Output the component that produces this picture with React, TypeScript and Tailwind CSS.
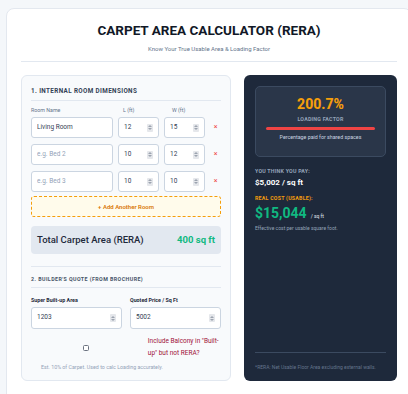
import React from 'react'

type Room = { name: string; placeholder: string; l: string; w: string }

const rooms: Room[] = [
  { name: 'Living Room', placeholder: 'Room name', l: '12', w: '15' },
  { name: '', placeholder: 'e.g. Bed 2', l: '10', w: '12' },
  { name: '', placeholder: 'e.g. Bed 3', l: '10', w: '10' },
]

function Spinner() {
  return (
    <span className="flex h-[8px] w-[6px] shrink-0 flex-col items-center justify-center gap-[1px] rounded-[1px] bg-[#e5e7eb]">
      <svg width="4" height="2" viewBox="0 0 4 2">
        <path d="M0 2 L2 0 L4 2 Z" fill="#9ca3af" />
      </svg>
      <svg width="4" height="2" viewBox="0 0 4 2">
        <path d="M0 0 L2 2 L4 0 Z" fill="#9ca3af" />
      </svg>
    </span>
  )
}

function NumberBox({ value, className }: { value: string; className?: string }) {
  return (
    <div
      className={`flex items-center rounded-[3px] border border-[#cbd5e1] bg-white pl-[5px] pr-[5px] ${className ?? ''}`}
    >
      <input
        readOnly
        value={value}
        className="w-full min-w-0 bg-transparent text-[6.5px] text-[#334155] outline-none"
      />
      <Spinner />
    </div>
  )
}

export default function App() {
  return (
    <div className="h-[394px] w-full overflow-hidden bg-[#f4f7fa] font-['Roboto',sans-serif]">
      <div className="ml-[6px] mt-[8px] w-[406px] rounded-lg border border-[#e3e8ef] bg-white px-[14px] pt-[12px] pb-[20px]">
        {/* header */}
        <div className="flex flex-col items-center border-b border-[#e2e8f0] pb-[8px]">
          <h1 className="text-[13.5px] font-bold leading-[18px] text-[#111827]">
            CARPET AREA CALCULATOR (RERA)
          </h1>
          <p className="mt-[6px] text-[6px] leading-[8px] text-[#64748b]">
            Know Your True Usable Area &amp; Loading Factor
          </p>
        </div>

        <div className="mt-[13px] grid grid-cols-[210px_153px] gap-[13px]">
          {/* left panel */}
          <div className="flex h-[306px] flex-col rounded-md border border-[#e2e8f0] bg-[#f8fafc] px-[9px] pt-[11px]">
            <h3 className="border-b border-[#e2e8f0] pb-[4px] text-[6.3px] font-bold uppercase leading-[9px] tracking-[0.06em] text-[#334155]">
              1. Internal Room Dimensions
            </h3>

            <div className="mt-[6px] grid grid-cols-[82px_41px_41px_1fr] gap-x-[5px] text-[5.3px] leading-[7px] text-[#64748b]">
              <span>Room Name</span>
              <span className="pl-[5px]">L (ft)</span>
              <span className="pl-[8px]">W (ft)</span>
              <span />
            </div>

            <div className="mt-[3px] flex flex-col gap-[6px]">
              {rooms.map((room, i) => (
                <div key={i} className="grid h-[21px] grid-cols-[82px_41px_41px_1fr] gap-x-[5px]">
                  <input
                    readOnly
                    value={room.name}
                    placeholder={room.placeholder}
                    className="min-w-0 rounded-[3px] border border-[#cbd5e1] bg-white px-[5px] text-[6.5px] text-[#334155] outline-none placeholder:text-[#94a3b8]"
                  />
                  <NumberBox value={room.l} />
                  <NumberBox value={room.w} />
                  <span className="flex items-center justify-center text-[7px] text-[#ef4444]">×</span>
                </div>
              ))}
            </div>

            <button className="mt-[4px] flex h-[21px] items-center justify-center rounded-[3px] border border-dashed border-[#f59e0b] bg-[#fffbeb] text-[6px] font-semibold text-[#d97706]">
              + Add Another Room
            </button>

            <div className="mt-[9px] flex h-[28px] items-center justify-between rounded-[4px] bg-[#e2e8f0] px-[6px]">
              <span className="text-[9.5px] font-medium text-[#1e293b]">Total Carpet Area (RERA)</span>
              <span className="text-[9.5px] font-bold text-[#10b981]">400 sq ft</span>
            </div>

            <div className="mt-[12px] border-t border-[#e2e8f0] pt-[9px]">
              <h3 className="border-b border-[#e2e8f0] pb-[4px] text-[5.3px] font-bold uppercase leading-[7px] tracking-[0.08em] text-[#475569]">
                2. Builder&apos;s Quote (From Brochure)
              </h3>
            </div>

            <div className="mt-[9px] grid grid-cols-2 gap-x-[8px]">
              <div className="flex flex-col">
                <label className="text-[5.3px] font-bold leading-[7px] text-[#1e293b]">Super Built-up Area</label>
                <NumberBox value="1203" className="mt-[3px] h-[22px]" />
              </div>
              <div className="flex flex-col">
                <label className="text-[5.3px] font-bold leading-[7px] text-[#1e293b]">Quoted Price / Sq Ft</label>
                <NumberBox value="5002" className="mt-[3px] h-[22px]" />
              </div>
            </div>

            <label className="mt-[7px] flex items-center">
              <span className="ml-[52px] h-[6px] w-[6px] rounded-[1.5px] border border-[#6b7280] bg-white" />
              <span className="ml-[59px] w-[76px] text-[6.5px] leading-[11.6px] text-[#9f1239]">
                Include Balcony in &quot;Built-up&quot; but not RERA?
              </span>
            </label>

            <p className="ml-[10px] mt-[5px] text-[5.3px] leading-[7px] text-[#94a3b8]">
              Est. 10% of Carpet. Used to calc Loading accurately.
            </p>
          </div>

          {/* right panel */}
          <div className="flex h-[306px] flex-col rounded-md bg-[#1e293b] px-[11px] pt-[11px] pb-[10px]">
            <div className="flex h-[71px] flex-col items-center rounded-[5px] border border-[#3b4a60] bg-[#2a3649] px-[10px] pt-[9px]">
              <span className="text-[14px] font-extrabold leading-[17px] text-[#f59e0b]">200.7%</span>
              <span className="mt-[3px] text-[5.3px] font-bold uppercase leading-[7px] tracking-[0.04em] text-[#94a3b8]">
                Loading Factor
              </span>
              <div className="mt-[4px] h-[3px] w-full rounded-full bg-[#ef4444]" />
              <span className="mt-[4px] text-[5.3px] leading-[7px] text-[#cbd5e1]">
                Percentage paid for shared spaces
              </span>
            </div>

            <span className="mt-[11px] text-[5.3px] font-bold uppercase leading-[7px] tracking-[0.04em] text-[#94a3b8]">
              You think you pay:
            </span>
            <span className="mt-[3px] text-[8px] font-bold leading-[10px] text-white">$5,002 / sq ft</span>

            <span className="mt-[7px] text-[5.3px] font-bold uppercase leading-[7px] tracking-[0.04em] text-[#f59e0b]">
              Real cost (usable):
            </span>
            <div className="mt-[2px] flex items-baseline gap-[4px]">
              <span className="text-[14px] font-bold leading-[18px] text-[#10b981]">$15,044</span>
              <span className="text-[5px] text-[#e2e8f0]">/ sq ft</span>
            </div>
            <span className="mt-[3px] text-[5px] leading-[7px] text-[#94a3b8]">
              Effective cost per usable square foot.
            </span>

            <div className="mt-auto border-t border-[#3b4a60] pt-[11px]">
              <p className="text-[5px] leading-[7px] text-[#64748b]">
                *RERA: Net Usable Floor Area excluding external walls.
              </p>
            </div>
          </div>
        </div>
      </div>
    </div>
  )
}
